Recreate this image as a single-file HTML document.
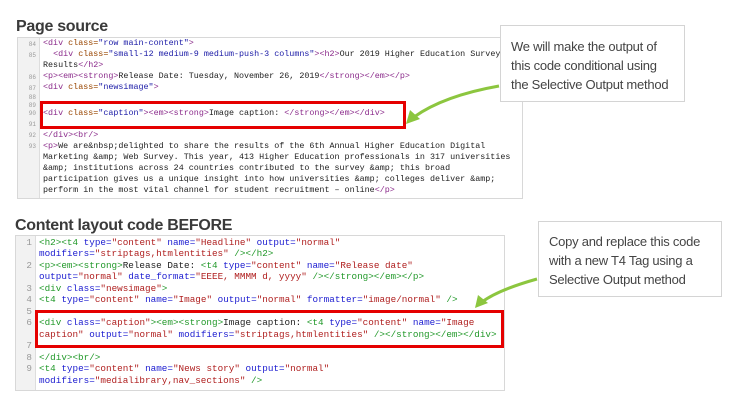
<!DOCTYPE html>
<html><head><meta charset="utf-8"><style>
*{margin:0;padding:0;box-sizing:border-box}
body{width:735px;height:402px;background:#fff;position:relative;overflow:hidden;font-family:"Liberation Sans",sans-serif}
.h{position:absolute;font-weight:bold;font-size:16px;color:#3a3a3a;letter-spacing:-0.3px}
.box{position:absolute;border:1px solid #d8d8d8;background:#fff}
.gut{position:absolute;left:0;top:0;bottom:0;background:#f2f2f2;border-right:1px solid #ddd}
.ln{position:absolute;font-family:"Liberation Mono",monospace;white-space:pre;color:#222}
.n{position:absolute;font-family:"Liberation Mono",monospace;color:#999;text-align:right}
.t{color:#8b2b8b}.a{color:#994500}.v{color:#1a1aa6}
.g{color:#22992a}.b{color:#1b1bd0}.r{color:#b02020}
.red{position:absolute;border:3px solid #e50000}
.call{position:absolute;border:1px solid #d4d4d4;background:#fff;color:#444;font-size:13px;letter-spacing:-0.25px;line-height:19px;padding:0 0 0 10px;white-space:nowrap}
</style></head><body>
<div class="h" style="left:16px;top:18px">Page source</div>
<div class="box" style="left:17px;top:37px;width:506px;height:162px">
<div class="gut" style="width:22px"></div>
</div>
<div style="position:absolute;left:17px;top:37px;font-size:8.4px;line-height:11px">
<div class="n" style="left:0;width:19px;top:2px;font-size:6px">84</div>
<div class="n" style="left:0;width:19px;top:13px;font-size:6px">85</div>
<div class="n" style="left:0;width:19px;top:35px;font-size:6px">86</div>
<div class="n" style="left:0;width:19px;top:46px;font-size:6px">87</div>
<div class="n" style="left:0;width:19px;top:55px;font-size:6px">88</div>
<div class="n" style="left:0;width:19px;top:63px;font-size:6px">89</div>
<div class="n" style="left:0;width:19px;top:71px;font-size:6px">90</div>
<div class="n" style="left:0;width:19px;top:82px;font-size:6px">91</div>
<div class="n" style="left:0;width:19px;top:93px;font-size:6px">92</div>
<div class="n" style="left:0;width:19px;top:104px;font-size:6px">93</div>
</div>
<div style="font-size:8.4px;line-height:11px">
<div class="ln" style="left:43px;top:38px"><span class="t">&lt;div</span> <span class="a">class=</span><span class="v">"row main-content"</span><span class="t">&gt;</span></div>
<div class="ln" style="left:43px;top:49px">  <span class="t">&lt;div</span> <span class="a">class=</span><span class="v">"small-12 medium-9 medium-push-3 columns"</span><span class="t">&gt;&lt;h2&gt;</span>Our 2019 Higher Education Survey</div>
<div class="ln" style="left:43px;top:60px">Results<span class="t">&lt;/h2&gt;</span></div>
<div class="ln" style="left:43px;top:71px"><span class="t">&lt;p&gt;&lt;em&gt;&lt;strong&gt;</span>Release Date: Tuesday, November 26, 2019<span class="t">&lt;/strong&gt;&lt;/em&gt;&lt;/p&gt;</span></div>
<div class="ln" style="left:43px;top:82px"><span class="t">&lt;div</span> <span class="a">class=</span><span class="v">"newsimage"</span><span class="t">&gt;</span></div>
<div class="ln" style="left:43px;top:108px"><span class="t">&lt;div</span> <span class="a">class=</span><span class="v">"caption"</span><span class="t">&gt;&lt;em&gt;&lt;strong&gt;</span>Image caption: <span class="t">&lt;/strong&gt;&lt;/em&gt;&lt;/div&gt;</span></div>
<div class="ln" style="left:43px;top:130px"><span class="t">&lt;/div&gt;&lt;br/&gt;</span></div>
<div class="ln" style="left:43px;top:141px"><span class="t">&lt;p&gt;</span>We are&amp;nbsp;delighted to share the results of the 6th Annual Higher Education Digital</div>
<div class="ln" style="left:43px;top:152px">Marketing &amp;amp; Web Survey. This year, 413 Higher Education professionals in 317 universities</div>
<div class="ln" style="left:43px;top:163px">&amp;amp; institutions across 24 countries contributed to the survey &amp;amp; this broad</div>
<div class="ln" style="left:43px;top:174px">participation gives us a unique insight into how universities &amp;amp; colleges deliver &amp;amp;</div>
<div class="ln" style="left:43px;top:185px">perform in the most vital channel for student recruitment – online<span class="t">&lt;/p&gt;</span></div>
</div>
<div class="red" style="left:40px;top:101px;width:366px;height:28px"></div>

<div class="h" style="left:15px;top:217px">Content layout code BEFORE</div>
<div class="box" style="left:15px;top:235px;width:490px;height:156px"><div class="gut" style="width:20px"></div></div>
<div style="font-size:9.3px;line-height:11.4px">
<div class="n" style="left:15px;width:17px;top:237px">1</div>
<div class="n" style="left:15px;width:17px;top:260px">2</div>
<div class="n" style="left:15px;width:17px;top:283px">3</div>
<div class="n" style="left:15px;width:17px;top:294px">4</div>
<div class="n" style="left:15px;width:17px;top:306px">5</div>
<div class="n" style="left:15px;width:17px;top:317px">6</div>
<div class="n" style="left:15px;width:17px;top:340px">7</div>
<div class="n" style="left:15px;width:17px;top:352px">8</div>
<div class="n" style="left:15px;width:17px;top:363px">9</div>
<div class="ln" style="left:39px;top:237px"><span class="g">&lt;h2&gt;&lt;t4</span> <span class="b">type=</span><span class="r">"content"</span> <span class="b">name=</span><span class="r">"Headline"</span> <span class="b">output=</span><span class="r">"normal"</span></div>
<div class="ln" style="left:39px;top:248px"><span class="b">modifiers=</span><span class="r">"striptags,htmlentities"</span> <span class="g">/&gt;&lt;/h2&gt;</span></div>
<div class="ln" style="left:39px;top:260px"><span class="g">&lt;p&gt;&lt;em&gt;&lt;strong&gt;</span>Release Date: <span class="g">&lt;t4</span> <span class="b">type=</span><span class="r">"content"</span> <span class="b">name=</span><span class="r">"Release date"</span></div>
<div class="ln" style="left:39px;top:271px"><span class="b">output=</span><span class="r">"normal"</span> <span class="b">date_format=</span><span class="r">"EEEE, MMMM d, yyyy"</span> <span class="g">/&gt;&lt;/strong&gt;&lt;/em&gt;&lt;/p&gt;</span></div>
<div class="ln" style="left:39px;top:283px"><span class="g">&lt;div</span> <span class="b">class=</span><span class="r">"newsimage"</span><span class="g">&gt;</span></div>
<div class="ln" style="left:39px;top:294px"><span class="g">&lt;t4</span> <span class="b">type=</span><span class="r">"content"</span> <span class="b">name=</span><span class="r">"Image"</span> <span class="b">output=</span><span class="r">"normal"</span> <span class="b">formatter=</span><span class="r">"image/normal"</span> <span class="g">/&gt;</span></div>
<div class="ln" style="left:39px;top:317px"><span class="g">&lt;div</span> <span class="b">class=</span><span class="r">"caption"</span><span class="g">&gt;&lt;em&gt;&lt;strong&gt;</span>Image caption: <span class="g">&lt;t4</span> <span class="b">type=</span><span class="r">"content"</span> <span class="b">name=</span><span class="r">"Image</span></div>
<div class="ln" style="left:39px;top:329px"><span class="r">caption"</span> <span class="b">output=</span><span class="r">"normal"</span> <span class="b">modifiers=</span><span class="r">"striptags,htmlentities"</span> <span class="g">/&gt;&lt;/strong&gt;&lt;/em&gt;&lt;/div&gt;</span></div>
<div class="ln" style="left:39px;top:352px"><span class="g">&lt;/div&gt;&lt;br/&gt;</span></div>
<div class="ln" style="left:39px;top:363px"><span class="g">&lt;t4</span> <span class="b">type=</span><span class="r">"content"</span> <span class="b">name=</span><span class="r">"News story"</span> <span class="b">output=</span><span class="r">"normal"</span></div>
<div class="ln" style="left:39px;top:375px"><span class="b">modifiers=</span><span class="r">"medialibrary,nav_sections"</span> <span class="g">/&gt;</span></div>
</div>
<div class="red" style="left:35px;top:310px;width:469px;height:38px"></div>

<div class="call" style="left:500px;top:25px;width:185px;height:77px;padding-top:11px">We will make the output of<br>this code conditional using<br>the Selective Output method</div>
<div class="call" style="left:538px;top:221px;width:184px;height:76px;padding-top:10px">Copy and replace this code<br>with a new T4 Tag using a<br>Selective Output method</div>

<svg style="position:absolute;left:0;top:0" width="735" height="402">
<path d="M499 86 C465 92 435 102 414 117" stroke="#8cc63f" stroke-width="3" fill="none"/>
<polygon points="406,124 410,110 420,119" fill="#8cc63f"/>
<path d="M537 279 C512 286 494 293 482 302" stroke="#8cc63f" stroke-width="3" fill="none"/>
<polygon points="475,308 478,295 488,303" fill="#8cc63f"/>
</svg>
</body></html>
